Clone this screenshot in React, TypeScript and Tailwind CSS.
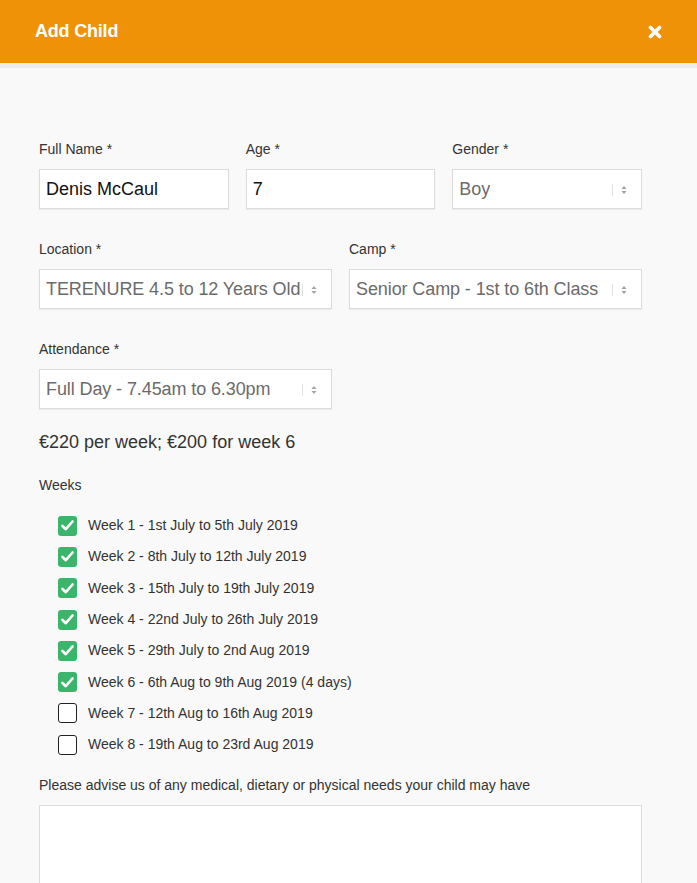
import React from 'react';

const weeks = [
  { label: 'Week 1 - 1st July to 5th July 2019', checked: true },
  { label: 'Week 2 - 8th July to 12th July 2019', checked: true },
  { label: 'Week 3 - 15th July to 19th July 2019', checked: true },
  { label: 'Week 4 - 22nd July to 26th July 2019', checked: true },
  { label: 'Week 5 - 29th July to 2nd Aug 2019', checked: true },
  { label: 'Week 6 - 6th Aug to 9th Aug 2019 (4 days)', checked: true },
  { label: 'Week 7 - 12th Aug to 16th Aug 2019', checked: false },
  { label: 'Week 8 - 19th Aug to 23rd Aug 2019', checked: false },
];

function Label({ children }: { children: React.ReactNode }): React.ReactElement {
  return <div className="mb-[10px] h-[20px] text-[14px] leading-[20px] text-[#333]">{children}</div>;
}

function TextInput({ value }: { value: string }): React.ReactElement {
  return (
    <div className="flex h-[40px] items-center border border-[#dcdcdc] bg-white px-[6px] text-[18px] text-[#111] shadow-[0_1px_1px_rgba(0,0,0,0.05)]">
      {value}
    </div>
  );
}

function SelectBox({ value }: { value: string }): React.ReactElement {
  return (
    <div className="relative flex h-[40px] items-center border border-[#dcdcdc] bg-white pl-[6px] pr-[29px] shadow-[0_1px_1px_rgba(0,0,0,0.05)]">
      <span className="overflow-hidden whitespace-nowrap text-[18px] tracking-[-0.1px] text-[#6b6b6b]">{value}</span>
      <span className="absolute right-[28px] top-[14px] h-[12px] w-px bg-[#e2e2e2]" />
      <svg className="absolute right-[14px] top-[14px]" width="6" height="12" viewBox="0 0 6 12">
        <path d="M3 2 L5.5 5 H0.5 Z" fill="#a3a3a3" />
        <path d="M3 10 L5.5 7 H0.5 Z" fill="#a3a3a3" />
      </svg>
    </div>
  );
}

function Checkbox({ checked }: { checked: boolean }): React.ReactElement {
  if (!checked) {
    return <span className="h-[20px] w-[19px] rounded-[3px] border-[1.5px] border-[#222] bg-white" />;
  }
  return (
    <span className="flex h-[20px] w-[19px] items-center justify-center rounded-[3px] bg-[#3cb56c]">
      <svg width="13" height="11" viewBox="0 0 13 11">
        <path d="M1.5 6 L4.8 9.2 L11.5 1.5" fill="none" stroke="#fff" strokeWidth="2.6" strokeLinecap="round" strokeLinejoin="round" />
      </svg>
    </span>
  );
}

export default function App(): React.ReactElement {
  return (
    <div className="min-h-[883px] w-full bg-[#f9f9f9] font-['Liberation_Sans',Arial,sans-serif]">
      <div className="flex h-[63px] items-center justify-between bg-[#f09208] pl-[35px] pr-[35px]">
        <div className="text-[18px] font-bold tracking-[-0.2px] text-white">Add Child</div>
        <svg width="14" height="14" viewBox="0 0 14 14">
          <path d="M2.5 2.5 L11.5 11.5 M11.5 2.5 L2.5 11.5" stroke="#fff" strokeWidth="3.6" strokeLinecap="round" />
        </svg>
      </div>
      <div className="h-[5px] bg-[#ededed]" />
      <div className="w-[681px] px-[39px] pb-[40px] pt-[71px]">
        <div className="grid grid-cols-3 gap-x-[17px]">
          <div>
            <Label>Full Name *</Label>
            <TextInput value="Denis McCaul" />
          </div>
          <div>
            <Label>Age *</Label>
            <TextInput value="7" />
          </div>
          <div>
            <Label>Gender *</Label>
            <SelectBox value="Boy" />
          </div>
        </div>
        <div className="mt-[30px] grid grid-cols-2 gap-x-[17px]">
          <div>
            <Label>Location *</Label>
            <SelectBox value="TERENURE 4.5 to 12 Years Old" />
          </div>
          <div>
            <Label>Camp *</Label>
            <SelectBox value="Senior Camp - 1st to 6th Class" />
          </div>
        </div>
        <div className="mt-[30px] grid grid-cols-2 gap-x-[17px]">
          <div>
            <Label>Attendance *</Label>
            <SelectBox value="Full Day - 7.45am to 6.30pm" />
          </div>
        </div>
        <div className="mt-[21px] h-[24px] text-[18px] leading-[24px] text-[#333]">€220 per week; €200 for week 6</div>
        <div className="mt-[21px] h-[20px] text-[14px] leading-[20px] text-[#333]">Weeks</div>
        <div className="mt-[15px] flex flex-col pl-[19px]">
          {weeks.map((w) => (
            <div key={w.label} className="flex h-[31.3px] items-center gap-[11px]">
              <Checkbox checked={w.checked} />
              <span className="text-[14px] text-[#333]">{w.label}</span>
            </div>
          ))}
        </div>
        <div className="mt-[15px] h-[20px] text-[14px] leading-[20px] text-[#333]">
          Please advise us of any medical, dietary or physical needs your child may have
        </div>
        <div className="mt-[10px] h-[140px] border border-[#dcdcdc] bg-white" />
      </div>
    </div>
  );
}
